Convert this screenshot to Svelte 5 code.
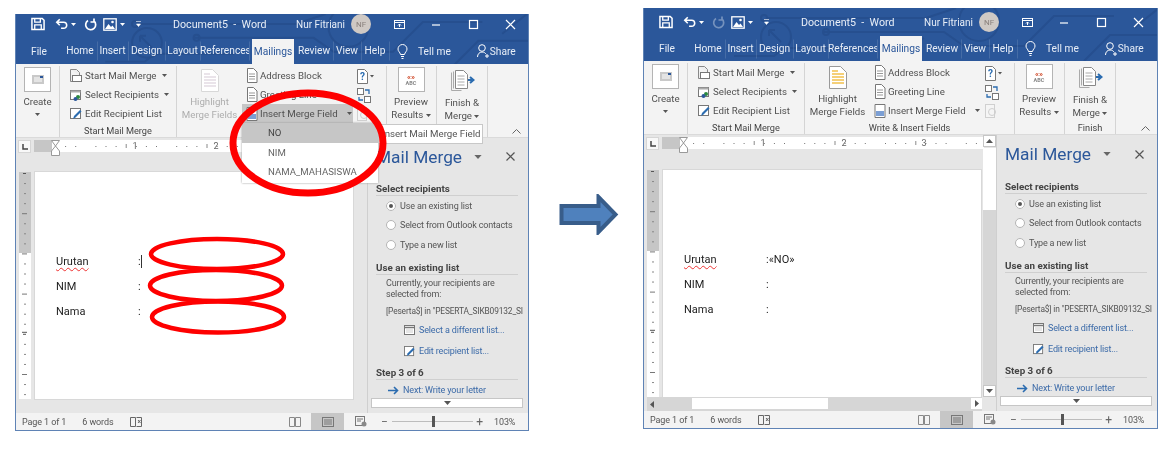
<script lang="ts">
  const tabs = [
    { name: "Home", w: 34 },
    { name: "Insert", w: 31 },
    { name: "Design", w: 37 },
    { name: "Layout", w: 35 },
    { name: "References", w: 49 }
  ];
  const rightTabs = [
    { name: "Review", w: 38 },
    { name: "View", w: 28 },
    { name: "Help", w: 28 }
  ];
  const hTicks = Array.from({ length: 30 }, (_, i) => i);
  const vTicks = Array.from({ length: 23 }, (_, i) => i);
</script>

{#snippet ruler()}
  <svg class="hruler" width="322" height="12" viewBox="0 0 322 12">
    <rect x="0" y="0" width="18" height="12" fill="#c6c6c6" />
    <rect x="18" y="0" width="304" height="12" fill="#fff" />
    {#each hTicks as i}
      {#if i % 8 !== 3}
        {#if i % 4 === 3}
          <rect x={21 + i * 10.1} y="4" width="1" height="4" fill="#8a8a8a" />
        {:else}
          <rect x={21 + i * 10.1} y="6" width="1" height="1" fill="#777" />
        {/if}
      {/if}
    {/each}
    <text x="101" y="9" class="rtext">1</text>
    <text x="182" y="9" class="rtext">2</text>
    <text x="262" y="9" class="rtext">3</text>
  </svg>
{/snippet}

{#snippet vruler()}
  <svg class="vruler" width="12" height="227" viewBox="0 0 12 227">
    <rect width="12" height="81" fill="#c6c6c6" />
    <rect y="81" width="12" height="146" fill="#fff" />
    {#each vTicks as i}
      {#if i === 0 || i === 16}
        <rect x="4" y={i * 10.05 + 1} width="3" height="1" fill="#555" />
        <rect x="3" y={i * 10.05 - 1} width="5" height="1" fill="#555" />
      {:else if i % 4 === 0}
        <rect x="3" y={i * 10.05 + 1} width="5" height="1" fill="#777" />
      {:else}
        <rect x="5" y={i * 10.05 + 1} width="2" height="1" fill="#888" />
      {/if}
    {/each}
  </svg>
{/snippet}

{#snippet docIcon()}
  <svg width="12" height="15" viewBox="0 0 12 15">
    <path d="M1.500 .5h6l3.500 3.500v10.500h-9.500z" fill="#fff" stroke="#777" />
    <path d="M3 6h6M3 8.500h6M3 11h6" stroke="#999" />
  </svg>
{/snippet}

{#snippet caret()}
  <svg class="caret" width="5" height="3" viewBox="0 0 5 3"><path d="M0 0h5l-2.500 3z" fill="#555" /></svg>
{/snippet}

{#snippet word(after)}
  <section class="window" class:after>
    <header class="chrome">
      <svg class="circuit" width="100%" height="100%" viewBox="0 0 516 53" preserveAspectRatio="xMinYMin slice">
        <g fill="none" stroke="#264f8f" stroke-width="2">
          <circle cx="132" cy="29" r="15" />
          <path d="M125 22l12 12M125 22h6M125 22v6" />
          <circle cx="335" cy="13" r="20" />
          <path d="M122 10h160l30 -10M180 24h120l20 14h60l30 -30h60M90 48h40l10 -8h80M250 50l30 -20M440 53l26 -26h50M490 20l25 -20" />
          <circle cx="120" cy="10" r="3" />
          <circle cx="182" cy="24" r="3" />
        </g>
      </svg>
      <div class="titlebar">
        <div class="qat">
          <svg width="14" height="14" viewBox="0 0 15 14"><path d="M1 1h11l2 2v10H1z" fill="none" stroke="#fff" stroke-width="1.600" /><path d="M4 1v4h6V1M4 13V8h7v5" fill="none" stroke="#fff" stroke-width="1.400" /></svg>
          <svg class="undo" width="13" height="12" viewBox="0 0 15 12"><path d="M2 4h8a3.500 3.500 0 0 1 0 7H7M5.500 .5L2 4l3.500 3.500" fill="none" stroke="#fff" stroke-width="1.800" /></svg>
          <svg class="mini" width="5" height="3" viewBox="0 0 5 3"><path d="M0 0h5l-2.500 3z" fill="#fff" /></svg>
          <svg class="redo" class:off={after} width="13" height="13" viewBox="0 0 13 13"><path d="M4 2.500a5 5 0 1 0 6 .5M10 .5v3.500h-3.500" fill="none" stroke="#fff" stroke-width="1.700" /></svg>
          <svg class="pic" width="14" height="13" viewBox="0 0 14 13"><rect x=".8" y=".8" width="12.400" height="11.400" fill="none" stroke="#fff" stroke-width="1.300" /><path d="M2 11l3.500-5 2.500 3 1.500-1.500L12 11z" fill="#fff" /><circle cx="9.500" cy="4" r="1.300" fill="#fff" /></svg>
          <svg class="mini" width="5" height="3" viewBox="0 0 5 3"><path d="M0 0h5l-2.500 3z" fill="#fff" /></svg>
          <svg class="custom" width="6" height="6" viewBox="0 0 6 6"><path d="M0 .5h5M.5 3h4l-2 2.500z" fill="#fff" stroke="#fff" stroke-width=".6" /></svg>
        </div>
        <span class="doc-title">Document5&nbsp; -&nbsp; Word</span>
        <span class="user">Nur Fitriani</span>
        <span class="avatar">NF</span>
        <div class="winbtns">
          <svg width="11" height="9" viewBox="0 0 11 9"><rect x=".5" y=".5" width="10" height="8" fill="none" stroke="#fff" /><path d="M.5 2.500h10M5.500 7V4M4 5.500l1.500-1.500L7 5.500" fill="none" stroke="#fff" /></svg>
          <svg width="11" height="9" viewBox="0 0 11 9"><path d="M1 5h8" stroke="#fff" stroke-width="1.200" /></svg>
          <svg width="11" height="11" viewBox="0 0 11 11"><rect x="1.500" y="1.500" width="8" height="8" fill="none" stroke="#fff" stroke-width="1.200" /></svg>
          <svg width="11" height="11" viewBox="0 0 11 11"><path d="M1 1l9 9M10 1l-9 9" stroke="#fff" stroke-width="1.200" /></svg>
        </div>
      </div>
      <nav class="tabs">
        <span class="file">File</span>
        {#each tabs as t}
          <span class="tab" style="width:{t.w}px">{t.name}</span>
        {/each}
        <span class="active">Mailings</span>
        {#each rightTabs as t}
          <span class="tab" style="width:{t.w}px">{t.name}</span>
        {/each}
        <svg class="bulb" width="11" height="15" viewBox="0 0 11 15"><path d="M3.500 10.500C3 8 1 7.500 1 5a4.500 4.500 0 0 1 9 0c0 2.500-2 3-2.500 5.500zM4 12.500h3M4.500 14.500h2" fill="none" stroke="#fff" /></svg>
        <span class="tell">Tell me</span>
        <svg class="person" width="12" height="14" viewBox="0 0 12 14"><circle cx="5" cy="4" r="3.300" fill="none" stroke="#fff" /><path d="M.5 13c0-3 2-5 4.500-5s3 1 4 2M8 12h4M10 10v4" fill="none" stroke="#fff" /></svg>
        <span class="share">Share</span>
      </nav>
    </header>

    <div class="ribbon">
      <div class="group create-g">
        <div class="bigbtn">
          <span class="iconbox">
            <svg width="12" height="9" viewBox="0 0 12 9"><rect width="12" height="9" fill="#c9c9c9" /><rect x="2" y="2" width="8" height="5" fill="#e4e4e4" /><rect x="8" y="1" width="3" height="2" fill="#2b579a" /></svg>
          </span>
          <span>Create</span>
          {@render caret()}
        </div>
      </div>

      <div class="group start-g">
        <div class="rows">
          <div class="row">
            <svg width="12" height="14" viewBox="0 0 12 14"><path d="M.5.500h6l3 3v3M.5.500v12h2" fill="#eee" stroke="#888" /><rect x="2.500" y="6.500" width="9" height="6" fill="#fff" stroke="#777" /></svg>
            <span>Start Mail Merge</span>{@render caret()}
          </div>
          <div class="row">
            <svg width="12" height="14" viewBox="0 0 12 14"><rect x=".5" y="2.500" width="10" height="9" fill="#fff" stroke="#777" /><rect x=".5" y="2.500" width="10" height="2" fill="#aaa" /><circle cx="8" cy="9" r="2" fill="#2b8a3e" /><circle cx="5.500" cy="11" r="2" fill="#2b579a" /></svg>
            <span>Select Recipients</span>{@render caret()}
          </div>
          <div class="row">
            <svg width="12" height="14" viewBox="0 0 12 14"><rect x=".5" y="1.500" width="10" height="10" fill="#fff" stroke="#777" /><path d="M3 12l1-3 6-6 1.500 1.500-6 6z" fill="#2b6cb0" /></svg>
            <span>Edit Recipient List</span>
          </div>
        </div>
        <small>Start Mail Merge</small>
      </div>

      <div class="group write-g">
        <div class="write-cols">
          <div class="bigbtn hl" class:dim={!after}>
            <svg width="18" height="23" viewBox="0 0 18 23">
              <path d="M.5.500h11l6 6v16H.5z" fill="#fff" stroke={after ? "#999" : "#d8d8d8"} />
              <path d="M3 5h6M3 8h12M3 11h12M3 14h12M3 17h12" stroke={after ? "#f2c14e" : "#e4dce4"} stroke-width="1.300" />
            </svg>
            <span>Highlight</span>
            <span>Merge Fields</span>
          </div>
          <div class="rows insert-rows">
            <div class="row">{@render docIcon()}<span>Address Block</span></div>
            <div class="row">{@render docIcon()}<span>Greeting Line</span></div>
            <div class="row" class:pressed={!after}>
              <svg width="12" height="14" viewBox="0 0 12 14"><path d="M1 .5h10v13H1z" fill="#fff" stroke="#777" /><path d="M2 7h8v5H2z" fill="#7c9fd4" /></svg>
              <span>Insert Merge Field</span>{@render caret()}
            </div>
          </div>
          <div class="smallicons">
            <svg width="17" height="15" viewBox="0 0 17 15"><path d="M.5.500h7l3 3v11H.5z" fill="#fff" stroke="#777" /><text x="3" y="11" class="q">?</text><path d="M13 6h4l-2 2.500z" fill="#555" /></svg>
            <svg width="14" height="15" viewBox="0 0 14 15"><rect x=".5" y=".5" width="6" height="6" fill="#fff" stroke="#777" /><rect x="7.500" y="8.500" width="6" height="6" fill="#fff" stroke="#777" /><path d="M8 2h4v4M6 12H2V9" fill="none" stroke="#2b6cb0" stroke-width="1.300" /></svg>
            <svg width="12" height="14" viewBox="0 0 12 14"><rect x=".5" y=".5" width="9" height="13" fill="#f5f5f5" stroke="#d0d0d0" /><circle cx="7" cy="8" r="3.500" fill="none" stroke="#cfcfcf" /></svg>
          </div>
        </div>
        {#if after}<small>Write &amp; Insert Fields</small>{/if}
      </div>

      <div class="group preview-g">
        <div class="bigbtn">
          <span class="iconbox abc">
            <b>«»</b>
            <i>ABC</i>
          </span>
          <span>Preview</span>
          <span>Results {@render caret()}</span>
        </div>
      </div>

      <div class="group finish-g">
        <div class="bigbtn">
          <svg width="25" height="21" viewBox="0 0 25 21">
            <path d="M1.500 2.500v18h10M3.500 1.500v17" fill="none" stroke="#aaa" />
            <path d="M5.500.5h8l4 4v14h-12z" fill="#fff" stroke="#888" />
            <path d="M7.500 6h7M7.500 9h7M7.500 12h7M7.500 15h7" stroke="#aaa" />
            <path d="M18 10h4M20 7l3.500 3-3.500 3" fill="none" stroke="#2b6cb0" stroke-width="2" />
          </svg>
          <span class="fin">Finish &amp;</span>
          <span>Merge {@render caret()}</span>
        </div>
        {#if after}<small>Finish</small>{/if}
      </div>

      <svg class="collapse" width="9" height="5" viewBox="0 0 9 5"><path d="M.5 4.500l4-4 4 4" fill="none" stroke="#666" /></svg>
    </div>

    <div class="middle">
      <div class="docarea">
        <div class="rulerline">
          <span class="corner"><svg width="6" height="6" viewBox="0 0 6 6"><path d="M1 0v5h5" fill="none" stroke="#444" stroke-width="1.500" /></svg></span>
          {@render ruler()}
          <svg class="marker" width="9" height="16" viewBox="0 0 9 16"><path d="M.5.500h8L4.500 6zM4.500 6l4 5v4.500h-8V11z" fill="#fff" stroke="#999" /></svg>
          {#if after}
            <span class="vs-up"><svg width="7" height="4" viewBox="0 0 7 4"><path d="M0 4h7L3.500 0z" fill="#555" /></svg></span>
          {/if}
        </div>
        <div class="docbody">
          {@render vruler()}
          <div class="page">
            <div class="line"><span class="lbl"><span class="squiggle">Urutan</span></span><span class:caretmark={!after}>:</span>{#if after}«NO»{/if}</div>
            <div class="line"><span class="lbl">NIM</span><span>:</span></div>
            <div class="line"><span class="lbl">Nama</span><span>:</span></div>
          </div>
          {#if after}
            <div class="vscroll">
              <span class="thumb"></span>
              <span class="vs-down"><svg width="7" height="4" viewBox="0 0 7 4"><path d="M0 0h7L3.500 4z" fill="#555" /></svg></span>
            </div>
          {/if}
        </div>
        <div class="hscroll" class:shown={after}>
          {#if after}
            <svg class="hs-left" width="4" height="7" viewBox="0 0 4 7"><path d="M4 0v7L0 3.500z" fill="#555" /></svg>
            <span class="hthumb"></span>
            <span class="hs-right"><svg width="4" height="7" viewBox="0 0 4 7"><path d="M0 0v7l4-3.500z" fill="#555" /></svg></span>
          {/if}
        </div>
      </div>

      <aside class="pane">
        <div class="pane-head">
          <h2>Mail Merge</h2>
          <svg class="pane-caret" width="8" height="4" viewBox="0 0 9 5"><path d="M0 0h9L4.500 5z" fill="#666" /></svg>
          <svg class="pane-x" width="9" height="9" viewBox="0 0 9 9"><path d="M.5.500l8 8M8.500.500l-8 8" stroke="#555" stroke-width="1.200" /></svg>
        </div>
        <h3>Select recipients</h3>
        <label class="radio"><i class="on"></i>Use an existing list</label>
        <label class="radio"><i></i>Select from Outlook contacts</label>
        <label class="radio"><i></i>Type a new list</label>
        <h3 class="second">Use an existing list</h3>
        <p class="current">Currently, your recipients are<br />selected from:</p>
        <p class="source">[Peserta$] in "PESERTA_SIKB09132_SI</p>
        <a class="link">
          <svg width="11" height="10" viewBox="0 0 11 10"><rect x=".5" y=".5" width="10" height="9" fill="#fff" stroke="#777" /><path d="M.5 2.500h10" stroke="#777" stroke-width="1.500" /><path d="M2 5h7M2 7h7" stroke="#ccc" /></svg>
          Select a different list...
        </a>
        <a class="link edit">
          <svg width="11" height="11" viewBox="0 0 12 12"><rect x=".5" y=".5" width="10" height="10" fill="#fff" stroke="#777" /><path d="M3 11l1-3 6-6 1.500 1.500-6 6z" fill="#2b6cb0" /></svg>
          Edit recipient list...
        </a>
        <h3 class="third">Step 3 of 6</h3>
        <a class="next">
          <svg width="11" height="9" viewBox="0 0 11 9"><path d="M0 4.500h9.500M6 1l3.500 3.500L6 8" fill="none" stroke="#2b6cb0" stroke-width="1.600" /></svg>
          Next: Write your letter
        </a>
        <div class="pane-scroll"><svg width="7" height="4" viewBox="0 0 7 4"><path d="M0 0h7L3.500 4z" fill="#555" /></svg></div>
      </aside>
    </div>

    <footer class="status">
      <span class="st-page">Page 1 of 1</span>
      <span class="st-words">6 words</span>
      <svg width="12" height="10" viewBox="0 0 12 10"><path d="M.5.500h5v9h-5zM6.500 9.500h5V.5h-5M8 3l2.500 3M10.500 3L8 6" fill="none" stroke="#666" /></svg>
      <span class="grow"></span>
      <span class="view">
        <svg width="12" height="10" viewBox="0 0 12 10"><path d="M.5.500h5v9h-5zM6.500.5h5v9h-5z" fill="none" stroke="#888" /></svg>
      </span>
      <span class="view on">
        <svg width="12" height="10" viewBox="0 0 12 10"><rect x=".5" y=".5" width="11" height="9" fill="none" stroke="#777" /><path d="M2 3h8M2 5h8M2 7h8" stroke="#777" /></svg>
      </span>
      <span class="view">
        <svg width="12" height="11" viewBox="0 0 12 11"><rect x=".5" y=".5" width="9" height="9" fill="none" stroke="#777" /><path d="M2 3h6M2 5h4" stroke="#777" /><circle cx="9" cy="8" r="2.500" fill="#888" /></svg>
      </span>
      <span class="zoomctl">
        <b>−</b>
        <span class="slider"><i></i></span>
        <b>+</b>
      </span>
      <span class="pct">103%</span>
    </footer>

    {#if !after}
      <div class="menu">
        <div class="item hot">NO</div>
        <div class="item">NIM</div>
        <div class="item">NAMA_MAHASISWA</div>
      </div>
      <div class="tip">Insert Mail Merge Field</div>
    {/if}
  </section>
{/snippet}

<main class="stage">
  {@render word(false)}
  <svg class="arrow" width="60" height="41" viewBox="0 0 60 41">
    <path d="M2.500 12h37V3l17 17.500-17 17.500v-9h-37z" fill="#4f81bd" stroke="#385d8a" stroke-width="4" />
  </svg>
  {@render word(true)}

  <svg class="marks" width="1172" height="449" viewBox="0 0 1172 449">
    <g fill="none" stroke="#fe0000">
      <ellipse cx="308" cy="143" rx="75" ry="50" stroke-width="7" />
      <ellipse cx="217" cy="254" rx="66" ry="15" stroke-width="4.500" />
      <ellipse cx="216" cy="285.500" rx="66" ry="15.500" stroke-width="4.500" />
      <ellipse cx="218" cy="317" rx="66" ry="15.500" stroke-width="4.500" />
    </g>
  </svg>
</main>

<style>
  :global(body) {
    margin: 0;
    background: #fff;
  }
  .stage {
    position: relative;
    display: flex;
    align-items: flex-start;
    width: 1172px;
    height: 449px;
    overflow: hidden;
    background: #fff;
    font-family: Roboto, "Liberation Sans", sans-serif;
    font-size: 9.7px;
    color: #444;
  }
  .window {
    position: relative;
    display: flex;
    flex-direction: column;
    flex: none;
    box-sizing: border-box;
    width: 514px;
    height: 417px;
    margin: 14px 0 0 15px;
    background: #e6e6e6;
    border: 1px solid #5f83b5;
    border-top: 0;
    filter: blur(0.35px);
  }
  .window.after {
    width: 515px;
    height: 421px;
    margin: 8px 0 0 24px;
  }
  .arrow {
    flex: none;
    margin: 194px 0 0 30px;
  }
  .marks {
    position: absolute;
    top: 0;
    left: 0;
    pointer-events: none;
  }

  .chrome {
    position: relative;
    display: flex;
    flex-direction: column;
    flex: none;
    height: 50px;
    background: #2b579a;
    color: #fff;
    overflow: hidden;
  }
  .after .chrome {
    height: 53px;
    padding-top: 4px;
    box-sizing: border-box;
  }
  .circuit {
    position: absolute;
    top: 0;
    left: 0;
  }
  .titlebar {
    position: relative;
    display: flex;
    align-items: center;
    flex: none;
    height: 20px;
    padding-left: 15px;
    font-size: 10.7px;
    color: #e8eef7;
  }
  .qat {
    display: flex;
    align-items: center;
    width: 127px;
    flex: none;
  }
  .qat svg { flex: none; }
  .undo { margin-left: 10px; }
  .qat .mini { margin-left: 3px; }
  .redo { margin-left: 8px; }
  .redo.off { opacity: 0.35; }
  .pic { margin-left: 6px; }
  .custom { margin-left: 11px; }
  .doc-title {
    width: 123px;
    flex: none;
    margin-left: 15px;
    white-space: nowrap;
  }
  .user {
    width: 55px;
    flex: none;
    font-size: 10px;
    white-space: nowrap;
  }
  .avatar {
    display: grid;
    place-items: center;
    flex: none;
    width: 20px;
    height: 20px;
    border-radius: 50%;
    background: #cfc9c4;
    color: #8a817c;
    font-size: 8px;
  }
  .winbtns {
    display: flex;
    align-items: center;
    gap: 26px;
    margin-left: 23px;
  }
  .tabs {
    position: relative;
    display: flex;
    align-items: center;
    flex: 1;
    min-height: 0;
    padding-top: 4px;
    box-sizing: border-box;
    font-size: 10.2px;
    color: #e8eef7;
  }
  .file {
    width: 47px;
    padding-left: 15px;
    flex: none;
    box-sizing: border-box;
  }
  .tab {
    flex: none;
    text-align: center;
    white-space: nowrap;
    overflow: hidden;
    box-shadow: 1px 0 0 -0.5px rgba(255, 255, 255, 0.25);
    height: 20px;
    line-height: 20px;
  }
  .active {
    flex: none;
    align-self: flex-end;
    width: 42px;
    margin: 0 1px 0 3px;
    height: 25px;
    line-height: 25px;
    text-align: center;
    background: #f3f3f3;
    color: #2b579a;
  }
  .bulb { margin-left: 8px; flex: none; }
  .tell { margin-left: 10px; }
  .person { margin-left: 26px; flex: none; }
  .share { margin-left: 1px; }

  .ribbon {
    position: relative;
    display: flex;
    flex: none;
    height: 74px;
    box-sizing: border-box;
    background: #f3f3f3;
    border-bottom: 1px solid #dadada;
    font-size: 9.7px;
    color: #505050;
  }
  .group {
    position: relative;
    flex: none;
    display: flex;
    flex-direction: column;
    box-sizing: border-box;
    height: 71px;
    margin-top: 2px;
    border-right: 1px solid #d4d4d4;
  }
  .group small {
    display: block;
    position: absolute;
    left: 0;
    right: 0;
    top: 59px;
    text-align: center;
    font-size: 9.2px;
    color: #444;
    white-space: nowrap;
  }
  .create-g { width: 44px; }
  .start-g { width: 117px; }
  .write-g { width: 210px; }
  .preview-g { width: 50px; }
  .finish-g { width: 51px; }
  .rows {
    display: flex;
    flex-direction: column;
  }
  .row {
    display: flex;
    align-items: center;
    gap: 3px;
    height: 19px;
    white-space: nowrap;
  }
  .row svg { flex: none; }
  .row .caret { margin-left: 2px; }
  .start-g .rows { padding: 0 0 0 10px; }
  .bigbtn {
    display: flex;
    flex-direction: column;
    align-items: center;
    padding-top: 1px;
    line-height: 13px;
    white-space: nowrap;
  }
  .bigbtn .caret { vertical-align: middle; }
  .create-g .caret { margin-top: 5px; }
  .iconbox {
    display: grid;
    place-items: center;
    box-sizing: border-box;
    width: 27px;
    height: 25px;
    margin-bottom: 3px;
    background: #fff;
    border: 1px solid #b4b4b4;
  }
  .abc {
    display: flex;
    flex-direction: column;
    justify-content: center;
    line-height: 6px;
  }
  .abc b { color: #d04a2a; font-size: 8px; }
  .abc i { color: #888; font-size: 5.5px; font-style: normal; font-weight: 700; }
  .create-g .bigbtn { width: 43px; }
  .preview-g .bigbtn { width: 48px; }
  .finish-g .bigbtn { padding-top: 4px; }
  .fin { margin-top: 5px; }
  .write-cols {
    display: flex;
  }
  .bigbtn.hl {
    width: 65px;
    flex: none;
    padding-top: 3px;
  }
  .hl svg { margin-bottom: 3px; }
  .dim { color: #adadad; }
  .insert-rows {
    width: 111px;
    flex: none;
  }
  .insert-rows .row {
    gap: 2px;
    padding-left: 4px;
  }
  .insert-rows .caret { margin-left: 7px; }
  .pressed { background: #c6c6c6; }
  .smallicons {
    display: flex;
    flex-direction: column;
    align-items: flex-start;
    gap: 4px;
    padding: 3px 0 0 4px;
  }
  .q {
    font: 700 10px Roboto, sans-serif;
    fill: #2b6cb0;
  }
  .collapse {
    position: absolute;
    right: 7px;
    bottom: 3px;
  }

  .middle {
    display: flex;
    flex: 1;
    min-height: 0;
  }
  .docarea {
    position: relative;
    width: 351px;
    flex: none;
    display: flex;
    flex-direction: column;
  }
  .after .docarea { width: 352px; }
  .rulerline {
    position: relative;
    display: flex;
    align-items: flex-start;
    height: 34px;
    flex: none;
  }
  .after .rulerline { height: 35px; }
  .corner {
    display: grid;
    place-items: center;
    box-sizing: border-box;
    width: 13px;
    height: 13px;
    margin: 2px 0 0 2px;
    background: #f8f8f8;
    border: 1px solid #d6d6d6;
  }
  .hruler {
    margin: 2px 0 0 3px;
  }
  .rtext {
    font: 9px Roboto, sans-serif;
    fill: #666;
    text-anchor: middle;
  }
  .marker {
    position: absolute;
    left: 35px;
    top: 2px;
  }
  .vs-up, .vs-down {
    position: absolute;
    display: grid;
    place-items: center;
    right: 0;
    width: 13px;
    height: 12px;
    background: #fff;
    border: 1px solid #c6c6c6;
    box-sizing: border-box;
  }
  .vs-up { top: 0; }
  .vs-down { bottom: 0; }
  .docbody {
    position: relative;
    display: flex;
    flex: none;
    height: 227px;
    padding-left: 3px;
  }
  .vruler {
    flex: none;
  }
  .page {
    box-sizing: border-box;
    width: 318px;
    height: 227px;
    margin-left: 4px;
    padding: 77px 0 0 21px;
    background: #fff;
    box-shadow: 0 0 0 1px #d8d8d8;
    font-size: 11px;
    line-height: 25px;
    color: #222;
  }
  .line { white-space: nowrap; }
  .lbl {
    display: inline-block;
    width: 82px;
  }
  .squiggle {
    text-decoration: underline wavy #e33 1px;
    text-underline-offset: 2px;
    text-decoration-skip-ink: none;
  }
  .caretmark { box-shadow: 1px 0 0 #333; }
  .vscroll {
    position: absolute;
    top: -22px;
    right: 0;
    width: 13px;
    height: 249px;
    background: #d6d6d6;
  }
  .thumb {
    position: absolute;
    top: 0;
    left: 0;
    width: 13px;
    height: 62px;
    background: #fff;
  }
  .hscroll {
    position: relative;
    height: 14px;
  }
  .hscroll.shown {
    background: #d6d6d6;
    margin: 0 14px 0 3px;
  }
  .hs-left { position: absolute; left: 3px; top: 4px; }
  .hthumb {
    position: absolute;
    left: 45px;
    top: 1px;
    width: 136px;
    height: 11px;
    background: #fff;
  }
  .hs-right {
    position: absolute;
    right: 0;
    top: 1px;
    width: 11px;
    height: 11px;
    display: grid;
    place-items: center;
    background: #fff;
  }

  .pane {
    position: relative;
    flex: 1;
    box-sizing: border-box;
    padding: 0 10px 0 8px;
    background: #e6e6e6;
    border-left: 1px solid #cfcfcf;
    font-size: 9px;
    letter-spacing: -0.15px;
    color: #555;
    white-space: nowrap;
    overflow: hidden;
  }
  .pane-head {
    display: flex;
    align-items: center;
    height: 37px;
    letter-spacing: 0;
  }
  .after .pane-head { height: 38px; }
  .pane-head h2 {
    margin: 0;
    font-size: 17.300px;
    font-weight: 400;
    color: #2b579a;
  }
  .pane-head svg { flex: none; }
  .pane-caret { margin-left: 12px; }
  .pane-x { margin-left: 24px; }
  h3 {
    margin: 7px 0 0;
    height: 13px;
    line-height: 13px;
    font-size: 9.8px;
    letter-spacing: 0;
    font-weight: 700;
    color: #444;
    border-bottom: 1px solid #cfcfcf;
  }
  .radio {
    display: flex;
    align-items: center;
    gap: 4px;
    height: 19.500px;
    padding-left: 10px;
  }
  .radio i {
    flex: none;
    box-sizing: border-box;
    width: 10px;
    height: 10px;
    border-radius: 50%;
    background: #fff;
    border: 1px solid #b5b5b5;
  }
  .radio i.on {
    border: 3px solid #fff;
    outline: 1px solid #b5b5b5;
    outline-offset: -1px;
    background: #555;
  }
  .second { margin-top: 6px; }
  .current {
    margin: 3px 0 0 10px;
    line-height: 11px;
  }
  .source {
    margin: 5.500px 0 0 10px;
    line-height: 12px;
    font-size: 8.400px;
    overflow: hidden;
    width: 138px;
  }
  .link {
    display: flex;
    align-items: center;
    gap: 4px;
    height: 21px;
    margin: 2.500px 0 0 28px;
    color: #3b6aa8;
  }
  .edit { margin-top: 0; }
  .third { margin-top: 4px; }
  .next {
    display: flex;
    align-items: center;
    gap: 4px;
    height: 12px;
    margin: 4.500px 0 0 12px;
    color: #3b6aa8;
  }
  .pane-scroll {
    display: grid;
    place-items: center;
    box-sizing: border-box;
    width: 152px;
    height: 10px;
    margin: 2px 0 0 -5px;
    background: #fff;
    border: 1px solid #c6c6c6;
  }

  .status {
    display: flex;
    align-items: center;
    flex: none;
    height: 17px;
    padding-left: 6px;
    background: #f3f3f3;
    font-size: 9px;
    letter-spacing: -0.1px;
    color: #555;
    white-space: nowrap;
  }
  .st-words { margin-left: 16px; }
  .status > svg { margin-left: 16px; }
  .grow { flex: 1; }
  .view {
    display: grid;
    place-items: center;
    width: 33px;
    height: 17px;
  }
  .view.on { background: #c6c6c6; }
  .zoomctl {
    display: flex;
    align-items: center;
    justify-content: space-between;
    margin-left: 4px;
    width: 102px;
    flex: none;
  }
  .zoomctl b {
    font-weight: 400;
    font-size: 12px;
    color: #666;
  }
  .slider {
    position: relative;
    display: block;
    width: 81px;
    height: 1px;
    background: #bdbdbd;
  }
  .slider i {
    position: absolute;
    left: 40px;
    top: -5px;
    width: 3px;
    height: 11px;
    background: #555;
  }
  .pct {
    width: 20px;
    margin: 0 14px 0 11px;
  }

  .menu {
    position: absolute;
    left: 226px;
    top: 109px;
    width: 136px;
    height: 60px;
    background: #fff;
    box-shadow: 0 0 2px #999;
    font-size: 9.600px;
    color: #666;
  }
  .item {
    height: 19.500px;
    line-height: 19.500px;
    padding-left: 26px;
  }
  .item.hot {
    background: #c6c6c6;
    color: #444;
  }
  .tip {
    position: absolute;
    left: 362px;
    top: 110px;
    box-sizing: border-box;
    width: 105px;
    height: 20px;
    line-height: 18px;
    padding-left: 3px;
    background: #fff;
    border: 1px solid #c8c8c8;
    font-size: 9.700px;
    color: #555;
    white-space: nowrap;
  }
</style>
